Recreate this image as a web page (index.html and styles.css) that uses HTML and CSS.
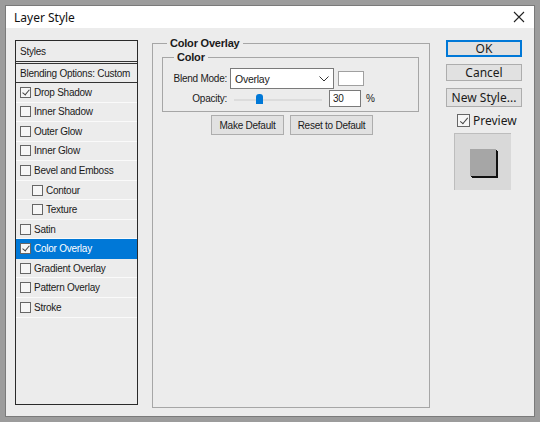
FILE: index.html
```html
<!DOCTYPE html>
<html lang="en">
<head>
    <meta charset="UTF-8">
    <title>Layer Style</title>
    <link rel="stylesheet" href="styles.css">
</head>
<body>
    <div class="window">
        <div class="titlebar">
            <span class="title">Layer Style</span>
            <svg class="close" width="12" height="12" viewBox="0 0 12 12">
                <path d="M1 1 L11 11 M11 1 L1 11" stroke="#222" stroke-width="1.1" fill="none"/>
            </svg>
        </div>

        <div class="client">
            <div class="styles-list">
                <div class="row header">Styles</div>
                <div class="row blending">Blending Options: Custom</div>
                <div class="row"><span class="check on"></span>Drop Shadow</div>
                <div class="row"><span class="check"></span>Inner Shadow</div>
                <div class="row"><span class="check"></span>Outer Glow</div>
                <div class="row"><span class="check"></span>Inner Glow</div>
                <div class="row"><span class="check"></span>Bevel and Emboss</div>
                <div class="row sub"><span class="check"></span>Contour</div>
                <div class="row sub"><span class="check"></span>Texture</div>
                <div class="row"><span class="check"></span>Satin</div>
                <div class="row selected"><span class="check on"></span>Color Overlay</div>
                <div class="row"><span class="check"></span>Gradient Overlay</div>
                <div class="row"><span class="check"></span>Pattern Overlay</div>
                <div class="row"><span class="check"></span>Stroke</div>
            </div>

            <fieldset class="group outer">
                <legend>Color Overlay</legend>
                <fieldset class="group inner">
                    <legend>Color</legend>
                    <div class="field">
                        <label>Blend Mode:</label>
                        <div class="select">
                            <span>Overlay</span>
                            <svg width="10" height="6" viewBox="0 0 10 6">
                                <path d="M0.5 0.5 L5 5 L9.5 0.5" stroke="#333" fill="none"/>
                            </svg>
                        </div>
                        <div class="swatch"></div>
                    </div>
                    <div class="field">
                        <label>Opacity:</label>
                        <div class="slider">
                            <div class="track"></div>
                            <div class="thumb" style="left: 22px;"></div>
                        </div>
                        <div class="num">30</div>
                        <span class="pct">%</span>
                    </div>
                </fieldset>
                <div class="defaults">
                    <button>Make Default</button>
                    <button>Reset to Default</button>
                </div>
            </fieldset>

            <div class="actions">
                <button class="primary">OK</button>
                <button>Cancel</button>
                <button>New Style...</button>
                <div class="preview-check"><span class="check on big"></span>Preview</div>
                <div class="preview">
                    <div class="swatch-preview"></div>
                </div>
            </div>
        </div>
    </div>
</body>
</html>
```

FILE: styles.css
```css
body {
    margin: 0;
    padding: 5px 6px 6px 5px;
    background-color: #9c9c9c;
    font-family: "Liberation Sans", Arial, sans-serif;
    font-size: 10px;
    letter-spacing: -0.25px;
    color: #1a1a1a;
}

.window {
    width: 528px;
    height: 410px;
    border: 1px solid #7a7a7a;
    background-color: #ececec;
    display: flex;
    flex-direction: column;
}

.titlebar {
    height: 22px;
    background-color: #fff;
    display: flex;
    align-items: center;
    justify-content: space-between;
    padding: 0 9px 0 8px;
}

.title {
    font-family: "Noto Sans", sans-serif;
    font-size: 12px;
    letter-spacing: 0;
    color: #111;
}

.client {
    display: flex;
    align-items: flex-start;
    padding: 12px 0 0 9px;
}

/* left list */
.styles-list {
    width: 121px;
    height: 363px;
    border: 1px solid #2a2a2a;
    white-space: nowrap;
}

.row {
    height: 19.55px;
    box-sizing: border-box;
    display: flex;
    align-items: center;
    padding-left: 4px;
    border-bottom: 1px solid #fafafa;
}

.row.header {
    height: 23px;
    border-bottom: 3px double #333;
}

.row.blending {
    height: 19px;
    border-bottom: 1px solid #333;
}

.row.sub {
    padding-left: 16px;
}

.row.selected {
    background-color: #0078d7;
    color: #fff;
    border-bottom-color: #0078d7;
}

.check {
    width: 9px;
    height: 9px;
    border: 1px solid #666;
    background-color: #f6f6f6;
    margin-right: 3px;
    position: relative;
    flex: none;
}

.check.on::after {
    content: "";
    position: absolute;
    left: 3px;
    top: 0px;
    width: 3px;
    height: 6px;
    border: solid #444;
    border-width: 0 1px 1px 0;
    transform: rotate(40deg);
}

.check.big {
    width: 11px;
    height: 11px;
}

.check.big::after {
    left: 4px;
    top: 1px;
    height: 7px;
}

/* middle groups */
.group {
    border: 1px solid #a6a6a6;
    margin: 0;
    min-width: 0;
}

.group legend {
    font-weight: bold;
    padding: 0 3px;
    font-size: 11px;
    letter-spacing: -0.2px;
}

.group.outer {
    width: 258px;
    height: 369px;
    margin: -3px 0 0 14px;
    padding: 0 9px;
}

.group.outer > legend {
    margin-left: 5px;
}

.group.inner {
    width: 257px;
    height: 61px;
    padding: 5px 0 0 0;
    margin-top: 2px;
    box-sizing: border-box;
}

.group.inner > legend {
    margin-left: 11px;
}

.field {
    display: flex;
    align-items: center;
    height: 21px;
    white-space: nowrap;
}

.field + .field {
    height: 17px;
    margin-top: 1px;
}

.field label {
    width: 64px;
    text-align: right;
    margin-right: 3px;
}

.select {
    width: 94px;
    height: 19px;
    border: 1px solid #7a7a7a;
    background-color: #fff;
    display: flex;
    align-items: center;
    justify-content: space-between;
    padding: 0 4px 0 4px;
    font-size: 10.5px;
}

.swatch {
    width: 24px;
    height: 13px;
    border: 1px solid #a0a0a0;
    background-color: #fff;
    margin-left: 4px;
}

.slider {
    width: 88px;
    height: 12px;
    margin-left: 4px;
    position: relative;
}

.track {
    position: absolute;
    left: 0;
    right: 0;
    top: 6px;
    height: 2px;
    background-color: #dcdcdc;
}

.thumb {
    position: absolute;
    top: 1px;
    width: 7px;
    height: 10px;
    background-color: #0078d7;
    border-radius: 3px 3px 0 0;
}

.num {
    height: 15px;
    border: 1px solid #7a7a7a;
    background-color: #fff;
    margin-left: 7px;
    padding-left: 3px;
    width: 27px;
    line-height: 15px;
}

.pct {
    margin-left: 5px;
}

.defaults {
    display: flex;
    gap: 6px;
    margin: 3px 0 0 49px;
}

.defaults button {
    width: 73px;
    padding: 0;
}

.defaults button + button {
    width: 83px;
}

button {
    font-family: "Liberation Sans", Arial, sans-serif;
    font-size: 10px;
    letter-spacing: -0.25px;
    background-color: #e1e1e1;
    border: 1px solid #adadad;
    color: #1a1a1a;
    height: 20px;
    padding: 0 8px;
    margin: 0;
}

/* right column */
.actions {
    display: flex;
    flex-direction: column;
    width: 76px;
    margin-left: 16px;
}

.actions button {
    width: 76px;
    height: 17px;
    font-family: "Noto Sans", sans-serif;
    font-size: 12px;
    letter-spacing: 0;
    line-height: 14px;
    padding: 0;
    margin-bottom: 7px;
}

.actions button:nth-child(3) {
    height: 19px;
    margin-bottom: 5px;
}

.actions button.primary {
    border: 1px solid #0078d7;
    box-shadow: inset 0 0 0 1px #0078d7;
}

.preview-check {
    display: flex;
    align-items: center;
    font-family: "Noto Sans", sans-serif;
    font-size: 12px;
    letter-spacing: 0;
    padding-left: 11px;
    height: 16px;
}

.preview {
    width: 56px;
    height: 56px;
    margin: 5px 0 0 8px;
    background-color: #d9d9d9;
    border-top: 1px solid #bdbdbd;
    border-left: 1px solid #bdbdbd;
    display: flex;
    align-items: center;
    justify-content: center;
}

.swatch-preview {
    width: 26px;
    height: 27px;
    background-color: #a6a6a6;
    box-shadow: 1px 1px 0 #111, 2px 2px 0 #111;
}
```
